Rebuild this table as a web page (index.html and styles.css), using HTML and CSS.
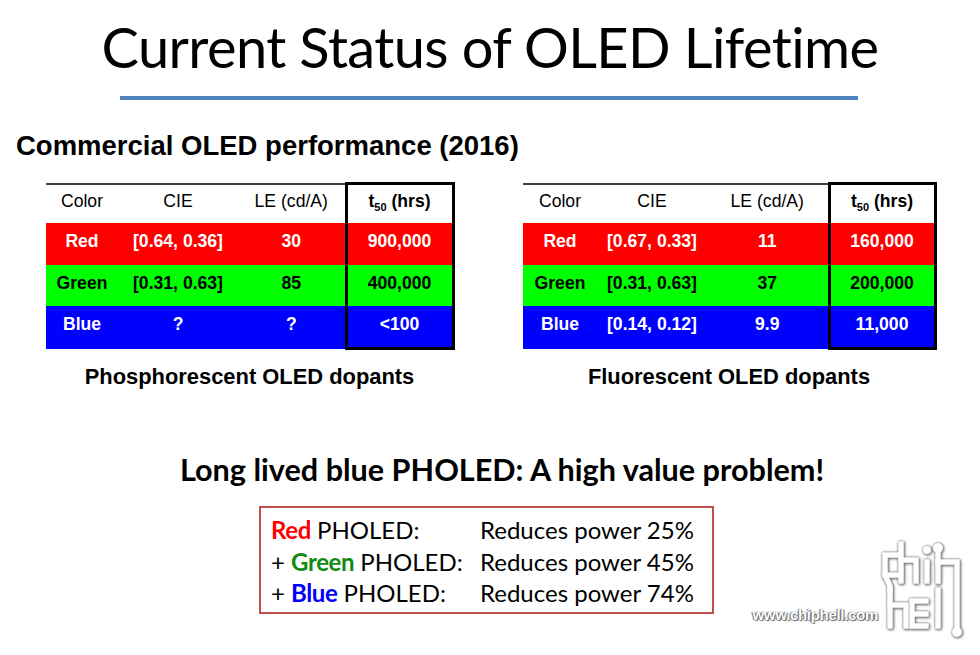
FILE: index.html
```html
<!DOCTYPE html>
<html lang="en">
<head>
<meta charset="utf-8">
<title>Current Status of OLED Lifetime</title>
<link rel="stylesheet" href="styles.css">
</head>
<body>
<div class="slide">
  <h1 class="title">Current Status of OLED Lifetime</h1>
  <div class="rule"></div>
  <h2 class="subtitle">Commercial OLED performance (2016)</h2>

  <div class="tables">
    <div class="panel panel-left">
      <table class="perf">
        <colgroup><col class="c1"><col class="c2"><col class="c3"><col class="c4"></colgroup>
        <tr class="head"><td>Color</td><td>CIE</td><td>LE (cd/A)</td><td class="hl">t<sub>50</sub> (hrs)</td></tr>
        <tr class="red"><td>Red</td><td>[0.64, 0.36]</td><td>30</td><td class="hl">900,000</td></tr>
        <tr class="green"><td>Green</td><td>[0.31, 0.63]</td><td>85</td><td class="hl">400,000</td></tr>
        <tr class="blue"><td>Blue</td><td>?</td><td>?</td><td class="hl">&lt;100</td></tr>
      </table>
      <p class="caption">Phosphorescent OLED dopants</p>
    </div>
    <div class="panel panel-right">
      <table class="perf">
        <colgroup><col class="c1"><col class="c2"><col class="c3"><col class="c4"></colgroup>
        <tr class="head"><td>Color</td><td>CIE</td><td>LE (cd/A)</td><td class="hl">t<sub>50</sub> (hrs)</td></tr>
        <tr class="red"><td>Red</td><td>[0.67, 0.33]</td><td>11</td><td class="hl">160,000</td></tr>
        <tr class="green"><td>Green</td><td>[0.31, 0.63]</td><td>37</td><td class="hl">200,000</td></tr>
        <tr class="blue"><td>Blue</td><td>[0.14, 0.12]</td><td>9.9</td><td class="hl">11,000</td></tr>
      </table>
      <p class="caption">Fluorescent OLED dopants</p>
    </div>
  </div>

  <h2 class="headline">Long lived blue PHOLED: A high value problem!</h2>

  <div class="box">
    <span><b class="k-red">Red</b> PHOLED:</span><span>Reduces power 25%</span>
    <span>+ <b class="k-green">Green</b> PHOLED:</span><span>Reduces power 45%</span>
    <span>+ <b class="k-blue">Blue</b> PHOLED:</span><span>Reduces power 74%</span>
  </div>

  <div class="watermark">
    <span class="wm-text">www.chiphell.com</span>
    <svg class="wm-logo" width="92" height="105" viewBox="0 0 92 105" aria-hidden="true">
      <g fill="none" stroke="#ffffff" stroke-width="5.5" stroke-linecap="square" stroke-linejoin="miter">
        <path d="M19 17 H7 V37 H19"/>
        <path d="M7 37 L12 48 V52"/>
        <path d="M23 6 V43"/>
        <path d="M23 22 H38 V43"/>
        <path d="M49 24 V43"/>
        <path d="M60 16 V43"/>
        <path d="M60 24 H79 V88"/>
        <path d="M12 52 V88"/>
        <path d="M12 67 H28 V88"/>
        <path d="M48 76 H34 V63 H48 M34 63 V88 H48"/>
        <path d="M60 52 V88"/>
      </g>
      <g fill="#ffffff">
        <circle cx="49" cy="12" r="4"/>
        <circle cx="60" cy="10" r="5"/>
        <circle cx="79" cy="94" r="5"/>
      </g>
    </svg>
  </div>
</div>
</body>
</html>
```

FILE: styles.css
```css
html, body {
  margin: 0;
  padding: 0;
  background: #ffffff;
}

.slide {
  position: relative;
  width: 980px;
  height: 655px;
  overflow: hidden;
  background: #ffffff;
  color: #000000;
}

.title {
  margin: 0;
  height: 94px;
  line-height: 94px;
  text-align: center;
  font-family: Lato, "Open Sans", sans-serif;
  font-weight: 400;
  font-size: 56px;
  letter-spacing: -0.6px;
}

.rule {
  margin: 2px 0 0 120px;
  width: 738px;
  height: 4px;
  background: #4f81bd;
}

.subtitle {
  margin: 28px 0 0 16px;
  height: 36px;
  line-height: 36px;
  font-family: "Liberation Sans", Arial, sans-serif;
  font-weight: 700;
  font-size: 27.5px;
}

.tables {
  display: flex;
  gap: 70px;
  margin: 18px 0 0 46px;
}

.panel-left { width: 407px; }
.panel-right { width: 412px; }

.perf {
  width: 100%;
  border-collapse: collapse;
  table-layout: fixed;
  font-family: "Liberation Sans", Arial, sans-serif;
  font-size: 17.6px;
  font-weight: 700;
  text-align: center;
}

.panel-left .c1 { width: 72px; }
.panel-left .c2 { width: 120px; }
.panel-left .c3 { width: 108px; }
.panel-left .c4 { width: 107px; }

.panel-right .c1 { width: 74px; }
.panel-right .c2 { width: 110px; }
.panel-right .c3 { width: 122px; }
.panel-right .c4 { width: 106px; }

.perf td {
  padding: 0 0 5px;
  vertical-align: middle;
}

.perf .head td {
  height: 33px;
  font-weight: 400;
  border-top: 2px solid #404040;
  background: #ffffff;
}

.perf .head td.hl {
  font-weight: 700;
  border-top: 3px solid #000000;
}

.perf sub {
  font-size: 11px;
  vertical-align: -4px;
  line-height: 0;
}

.perf .red td { height: 37px; background: #ff0000; color: #ffffff; }
.perf .green td { height: 36px; background: #00ff00; color: #000000; }
.perf .blue td { height: 36px; background: #0000ff; color: #ffffff; }

.perf td.hl {
  border-left: 3px solid #000000;
  border-right: 3px solid #000000;
}

.perf .blue td.hl {
  border-bottom: 3px solid #000000;
}

.caption {
  margin: 12px 0 0;
  height: 30px;
  line-height: 30px;
  text-align: center;
  font-family: "Liberation Sans", Arial, sans-serif;
  font-weight: 700;
  font-size: 21.9px;
}

.headline {
  margin: 58px 0 0;
  padding-left: 24px;
  height: 40px;
  line-height: 40px;
  text-align: center;
  font-family: Lato, "Open Sans", sans-serif;
  font-weight: 700;
  font-size: 30.6px;
}

.box {
  display: grid;
  grid-template-columns: 209px auto;
  margin: 16px 0 0 259px;
  width: 431px;
  padding: 6px 10px 3px;
  border: 2px solid #c0504d;
  font-family: Lato, "Open Sans", sans-serif;
  font-size: 24px;
  line-height: 31.5px;
}

.box b { font-weight: 700; letter-spacing: -0.4px; }
.k-red { color: #ff0000; }
.k-green { color: #138a13; }
.k-blue { color: #0000ff; }

.watermark {
  position: absolute;
  right: 10px;
  bottom: 12px;
  display: flex;
  align-items: flex-end;
  gap: 0;
}

.wm-text {
  margin-bottom: 20px;
  font-family: "Liberation Sans", Arial, sans-serif;
  font-weight: 700;
  font-size: 15px;
  letter-spacing: -0.3px;
  color: #ffffff;
  text-shadow: 0 0 1px #555, 1px 1px 1px #666, -1px 0 1px #777;
}

.wm-logo {
  display: block;
  filter: drop-shadow(0 0 1px #666) drop-shadow(1px 1px 1px #888);
}
```
